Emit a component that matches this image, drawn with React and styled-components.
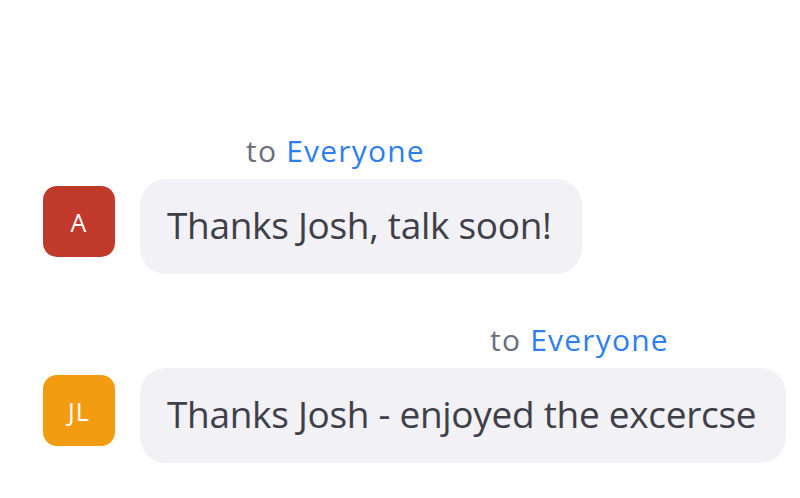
import styled, { createGlobalStyle } from "styled-components";

const GlobalStyle = createGlobalStyle`
  html, body {
    margin: 0;
    padding: 0;
    background: #ffffff;
  }
  body {
    font-family: "Open Sans", "Noto Sans", sans-serif;
  }
`;

const Chat = styled.div`
  width: 800px;
  height: 498px;
  overflow: hidden;
  box-sizing: border-box;
  padding-top: 133px;
  display: flex;
  flex-direction: column;
  gap: 48px;
`;

const Message = styled.div`
  display: flex;
  flex-direction: column;
`;

const Header = styled.div`
  padding-left: ${(p) => p.$offset}px;
  font-size: 30px;
  letter-spacing: 1.2px;
  line-height: 36px;
  height: 36px;
  margin-bottom: 10px;
  color: #6b6e7c;
  white-space: nowrap;
`;

const Recipient = styled.span`
  color: #2d7ff0;
`;

const Row = styled.div`
  display: flex;
  align-items: flex-start;
  gap: 25px;
  padding-left: 43px;
`;

const Avatar = styled.div`
  width: 72px;
  height: 71px;
  margin-top: 7px;
  border-radius: 14px;
  background: ${(p) => p.$color};
  color: #ffffff;
  display: flex;
  align-items: center;
  justify-content: center;
  font-size: 25px;
  letter-spacing: 1px;
  flex-shrink: 0;
`;

const Bubble = styled.div`
  height: 95px;
  box-sizing: border-box;
  padding: 0 30px 4px 27px;
  border-radius: 26px;
  background: #f1f1f6;
  color: #3f3f49;
  font-size: 37px;
  letter-spacing: -0.3px;
  display: flex;
  align-items: center;
  white-space: nowrap;
`;

const messages = [
  { initials: "A", color: "#c0392b", offset: 246, text: "Thanks Josh, talk soon!" },
  { initials: "JL", color: "#f39c12", offset: 490, text: "Thanks Josh - enjoyed the excercse" },
];

export default function App() {
  return (
    <>
      <GlobalStyle />
      <Chat>
        {messages.map((m) => (
          <Message key={m.text}>
            <Header $offset={m.offset}>
              to <Recipient>Everyone</Recipient>
            </Header>
            <Row>
              <Avatar $color={m.color}>{m.initials}</Avatar>
              <Bubble>{m.text}</Bubble>
            </Row>
          </Message>
        ))}
      </Chat>
    </>
  );
}
